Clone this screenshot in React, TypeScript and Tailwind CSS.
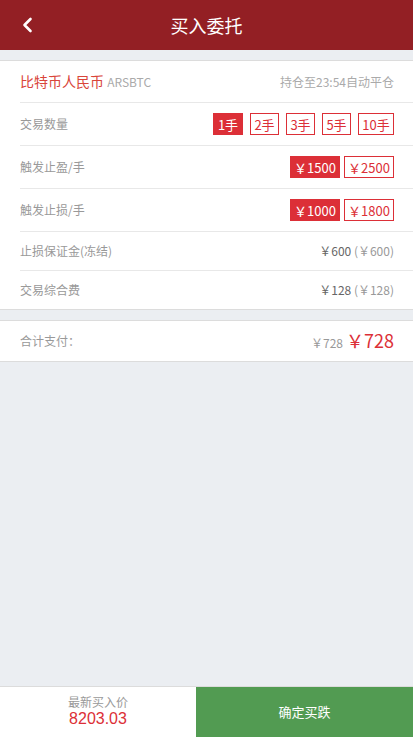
import React from "react";

const font = { fontFamily: '"Noto Sans CJK SC", "Liberation Sans", sans-serif' };

function Btn({ children, active, w }: { children: React.ReactNode; active?: boolean; w: string }) {
  return (
    <div
      className={`${w} h-[22px] flex items-center justify-center text-[13px] leading-none border ${
        active ? "bg-[#dc2f37] border-[#dc2f37] text-white" : "bg-white border-[#dc2f37] text-[#dc2f37]"
      }`}
    >
      {children}
    </div>
  );
}

function Row({
  label,
  children,
  h,
  last,
  labelClass,
}: {
  label: React.ReactNode;
  children: React.ReactNode;
  h: string;
  last?: boolean;
  labelClass?: string;
}) {
  return (
    <div className={`${h} ml-5 pr-[19px] flex items-center justify-between ${last ? "" : "border-b border-[#e8e8e8]"}`}>
      <span className={labelClass ?? "text-[12px] text-[#999]"}>{label}</span>
      {children}
    </div>
  );
}

export default function App() {
  return (
    <div className="w-[413px] h-[737px] bg-[#ebeef2] flex flex-col" style={font}>
      <div className="h-[50px] bg-[#931f24] flex items-center relative shrink-0">
        <svg className="absolute left-[21px] top-[17px]" width="14" height="16" viewBox="0 0 14 16">
          <path d="M9.5 2 L3.5 8 L9.5 14" stroke="white" strokeWidth="2.6" fill="none" strokeLinecap="round" strokeLinejoin="round" />
        </svg>
        <div className="w-full text-center text-white text-[18px]">买入委托</div>
      </div>
      <div className="h-[10px] shrink-0" />
      <div className="bg-white border-y border-[#dcdcdc] shrink-0">
        <Row
          h="h-[42px]"
          labelClass="text-[14px] text-[#d9453a]"
          label={
            <>
              比特币人民币 <span className="text-[12px] text-[#aaa]">ARSBTC</span>
            </>
          }
        >
          <span className="text-[12px] text-[#aaa]">持仓至23:54自动平仓</span>
        </Row>
        <Row h="h-[43px]" label="交易数量">
          <div className="flex gap-[7px]">
            <Btn w="w-[30px]" active>
              1手
            </Btn>
            <Btn w="w-[29px]">2手</Btn>
            <Btn w="w-[29px]">3手</Btn>
            <Btn w="w-[29px]">5手</Btn>
            <Btn w="w-[36px]">10手</Btn>
          </div>
        </Row>
        <Row h="h-[43px]" label="触发止盈/手">
          <div className="flex gap-[4px]">
            <Btn w="w-[50px]" active>
              ￥1500
            </Btn>
            <Btn w="w-[50px]">￥2500</Btn>
          </div>
        </Row>
        <Row h="h-[43px]" label="触发止损/手">
          <div className="flex gap-[4px]">
            <Btn w="w-[50px]" active>
              ￥1000
            </Btn>
            <Btn w="w-[50px]">￥1800</Btn>
          </div>
        </Row>
        <Row h="h-[39px]" label="止损保证金(冻结)">
          <span className="text-[12px] text-[#666]">
            ￥600 <span className="text-[#999]">(￥600)</span>
          </span>
        </Row>
        <Row h="h-[38px]" label="交易综合费" last>
          <span className="text-[12px] text-[#666]">
            ￥128 <span className="text-[#999]">(￥128)</span>
          </span>
        </Row>
      </div>
      <div className="h-[10px] shrink-0" />
      <div className="bg-white border-y border-[#dcdcdc] shrink-0">
        <Row h="h-[40px]" label="合计支付：" last>
          <span className="flex items-baseline gap-[3px]">
            <span className="text-[12px] text-[#999]">￥728</span>
            <span className="text-[18px] text-[#dc2f37] leading-none">￥728</span>
          </span>
        </Row>
      </div>
      <div className="flex-1" />
      <div className="h-[51px] border-t border-[#dcdcdc] flex shrink-0">
        <div className="w-[196px] bg-white flex flex-col items-center justify-center pb-[4px]">
          <span className="text-[12px] text-[#999] leading-[17px]">最新买入价</span>
          <span
            className="text-[16px] text-[#dc2f37] leading-[18px]"
            style={{ fontFamily: '"Liberation Sans", sans-serif' }}
          >
            8203.03
          </span>
        </div>
        <div className="flex-1 bg-[#529b52] flex items-center justify-center text-white text-[13px]">确定买跌</div>
      </div>
    </div>
  );
}
